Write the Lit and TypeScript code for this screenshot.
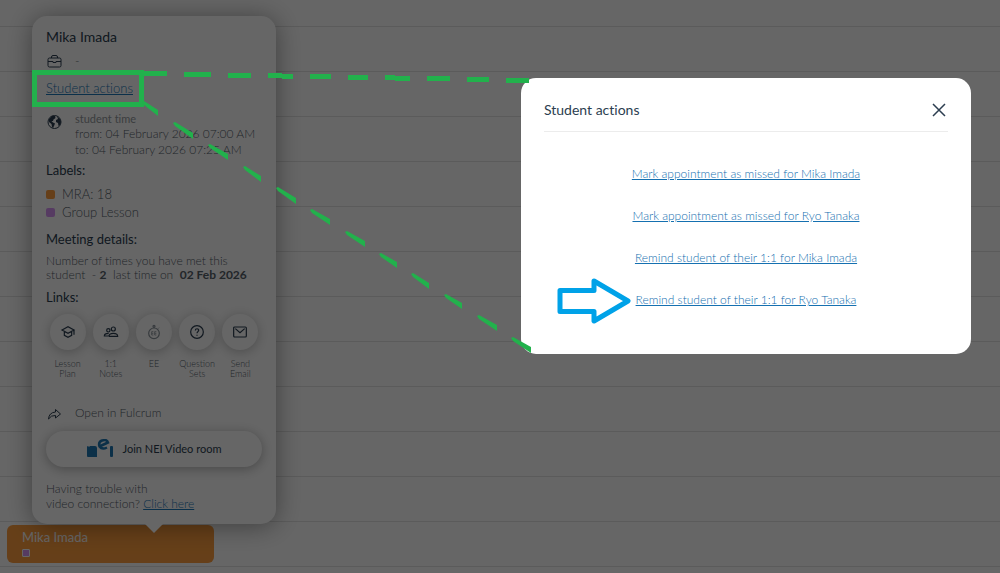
import { LitElement, html, css, svg } from "lit";
import { customElement } from "lit/decorators.js";

const cap = svg`<path d="M3 9 L12 4 L21 9 L12 14 Z M6.500 11 V17 L12 20 L17.500 17 V11 M21 9 V16"/>`;
const people = svg`<circle cx="8" cy="9.500" r="2.500"/><circle cx="15.500" cy="7.500" r="3"/><path d="M9 18 H2 C2 15.500 5 14 8.500 14 M9 18.500 H22 C22 15.500 19 14 15.500 14 C12 14 9 15.500 9 18.500"/>`;
const watch = svg`<circle cx="12" cy="14" r="8"/><circle cx="12" cy="3.500" r="1.500"/><path d="M12 5 V6 M18 7 L19.500 5.500 M11 11.500 H8.500 V16.500 H11 M8.500 14 H11 M15.500 11.500 H13 V16.500 H15.500 M13 14 H15.500" stroke-width="1.200"/>`;
const help = svg`<circle cx="12" cy="12" r="9.500"/><path d="M9.500 9.800 C9.500 6.200 14.800 6.400 14.500 9.600 C14.300 11.500 12 11.500 12 14 M12 16 V17.500"/>`;
const mail = svg`<rect x="2.500" y="4.500" width="19" height="15" rx="1.500"/><path d="M5 7 L12 13 L19 7"/>`;

const shortcuts = [
  { label: "Lesson Plan", icon: cap },
  { label: "1:1 Notes", icon: people },
  { label: "EE", icon: watch, soft: true },
  { label: "Question Sets", icon: help },
  { label: "Send Email", icon: mail },
];

const actions = [
  "Mark appointment as missed for Mika Imada",
  "Mark appointment as missed for Ryo Tanaka",
  "Remind student of their 1:1 for Mika Imada",
  "Remind student of their 1:1 for Ryo Tanaka",
];

// Hand-drawn dashes of the callout: start x, start y, end x, end y (upper edge).
const dashes = [
  [144, 101, 158, 110], [175, 122, 193, 133], [210, 144, 228, 154], [245, 166, 261, 176],
  [278, 187, 296, 198], [312, 209, 330, 219], [347, 231, 365, 241], [381, 253, 397, 262],
  [413, 273, 429, 283], [446, 294, 462, 303], [479, 315, 497, 325], [513, 337, 531, 347],
];

@customElement("student-popover")
class StudentPopover extends LitElement {
  static styles = css`
    :host {
      display: block;
      box-sizing: border-box;
      background: #fff;
      border-radius: 15px;
      padding: 12px 14px 13px;
      box-shadow: 0 2px 26px rgba(0, 0, 0, 0.4);
      color: #56616a;
      font-size: 12px;
      font-weight: 300;
      line-height: 16px;
    }
    :host::after {
      content: "";
      position: absolute;
      top: 100%;
      left: 50%;
      margin-left: -9px;
      border: 9px solid transparent;
      border-top-color: #fff;
      border-bottom: 0;
    }
    h2, h3, p { margin: 0; font-weight: 400; color: #2c3e50; }
    h2 { font-size: 14px; line-height: 18px; }
    h3 { font-size: 13px; line-height: 18px; }
    a { color: #1c78b8; }
    p { color: inherit; font-weight: inherit; }
    .line { display: grid; grid-template-columns: 17px 1fr; column-gap: 12px; }
    .line svg { width: 16px; height: 16px; color: #2c3e50; }
    .job { margin-top: 7px; }
    .act { margin: 11px 0 16px; font-size: 13px; }
    .time { margin-bottom: 3px; white-space: nowrap; }
    .time svg { margin-top: 1px; }
    .hint { font-size: 11px; line-height: 14px; font-weight: 400; color: #93999d; }
    .tags { list-style: none; margin: 6px 0 9px; padding: 0; line-height: 18px; font-size: 13px; }
    .tags li { display: flex; align-items: center; gap: 7px; }
    .dot { width: 9px; height: 9px; border-radius: 2px; background: #ff9f3f; }
    .violet { background: #d895f5; }
    .met { margin: 6px 0 6px; line-height: 14px; }
    .met b { font-weight: 700; }
    .round { display: grid; grid-template-columns: repeat(5, 1fr); margin-top: 8px; }
    .round button {
      font: 300 9px/10px Lato, sans-serif;
      color: #56616a;
      border: 0;
      padding: 0;
      background: none;
      display: flex;
      flex-direction: column;
      align-items: center;
      gap: 9px;
    }
    .label { width: min-content; }
    .disc {
      display: grid;
      place-items: center;
      width: 36px;
      height: 36px;
      border-radius: 50%;
      background: #fff;
      box-shadow: 0 2px 12px rgba(0, 0, 0, 0.25);
      color: #2c3e50;
    }
    .disc.soft { color: #8a939b; }
    .disc svg { width: 16px; height: 16px; }
    .open { margin: 26px 0 10px; font-size: 12px; }
    .join {
      display: flex;
      align-items: center;
      justify-content: center;
      gap: 9px;
      width: 100%;
      height: 36px;
      border: 0;
      border-radius: 18px;
      background: #fff;
      box-shadow: 0 2px 12px rgba(0, 0, 0, 0.3);
      font: 400 11px/16px Lato, sans-serif;
      color: #2c3e50;
    }
    .join svg { width: 27px; height: 20px; }
    .trouble { margin-top: 14px; line-height: 15px; }
  `;

  render() {
    return html`
      <h2>Mika Imada</h2>
      <div class="line job">
        <svg viewBox="0 0 16 16" fill="none" stroke="currentColor"><rect x="2" y="5" width="13" height="9" rx="1.500"/><path d="M5.500 5 V4 Q5.500 2.500 7 2.500 H10 Q11.500 2.500 11.500 4 V5 M2 8.500 H7 V9.500 H10 V8.500 H15"/></svg>
        <span>-</span>
      </div>
      <p class="act"><a href="#actions">Student actions</a></p>
      <div class="line time">
        <svg viewBox="0 0 16 16"><circle cx="8.500" cy="9" r="6.500" fill="none" stroke="currentColor"/><path fill="currentColor" d="M3 6 L6 3 L9 3 L9.500 5 L7.500 6.500 L7 8 L5.500 8 L7 9.500 L9 10.500 L8 13 L7 15 L6 14 L5.500 11 L3 9 Z M11 3.500 L14 6 L15 9 L14 12 L12.500 13 L12 10 L10 9 L10 7 L12 6 Z"/></svg>
        <div>
          <div class="hint">student time</div>
          <div>from: 04 February 2026 07:00 AM</div>
          <div>to: 04 February 2026 07:25 AM</div>
        </div>
      </div>
      <h3>Labels:</h3>
      <ul class="tags">
        <li><span class="dot"></span>MRA: 18</li>
        <li><span class="dot violet"></span>Group Lesson</li>
      </ul>
      <h3>Meeting details:</h3>
      <p class="met">Number of times you have met this<br />student &nbsp;- <b>2</b> &nbsp;last time on &nbsp;<b>02 Feb 2026</b></p>
      <h3>Links:</h3>
      <div class="round">
        ${shortcuts.map((s) => html`<button type="button">
          <span class="disc ${s.soft ? "soft" : ""}"><svg viewBox="0 0 24 24" fill="none" stroke="currentColor" stroke-width="1.800">${s.icon}</svg></span>
          <span class="label">${s.label}</span>
        </button>`)}
      </div>
      <div class="line open">
        <svg viewBox="0 0 16 16" fill="none" stroke="currentColor"><path stroke-linejoin="round" d="M9.500 4.500 L14.500 9 L9.500 13 V10.500 Q5 10 2.500 14 Q3 7.500 9.500 7 Z"/></svg>
        <span>Open in Fulcrum</span>
      </div>
      <button class="join" type="button">
        <svg viewBox="0 0 27 20" fill="#1f79b5"><path d="M0 8 Q0 7 1 7 L2 8 L3 7 H8 Q10 7 10 9 V18 H1 Q0 18 0 17 Z"/><rect x="23" y="7" width="3" height="11" rx="1"/><path d="M20 8.500 Q15 11 12.500 7.500 Q11 3 15 1.500 Q20 0 21 3.500 L13.500 7" fill="none" stroke="#1f79b5" stroke-width="2.500"/></svg>
        Join NEI Video room
      </button>
      <p class="trouble">Having trouble with<br />video connection? <a href="#help">Click here</a></p>
    `;
  }
}

@customElement("actions-dialog")
class ActionsDialog extends LitElement {
  static styles = css`
    :host {
      display: block;
      box-sizing: border-box;
      background: #fff;
      border-radius: 15px;
      padding: 20px 23px 45px;
      color: #2c3e50;
    }
    header {
      display: flex;
      align-items: center;
      justify-content: space-between;
      height: 33px;
      border-bottom: 1px solid #ececec;
    }
    h1 { margin: 0; padding-bottom: 9px; font-size: 14px; line-height: 16px; font-weight: 400; }
    header button { width: 18px; height: 18px; padding: 0; margin-bottom: 9px; border: 0; background: none; color: inherit; }
    header svg { display: block; width: 18px; height: 18px; }
    ul {
      list-style: none;
      margin: 33px 0 0;
      padding: 0;
      display: grid;
      gap: 24px;
      justify-items: center;
      font-size: 12px;
      font-weight: 300;
      line-height: 18px;
    }
    a { color: #1570b0; }
  `;

  render() {
    return html`
      <header>
        <h1>Student actions</h1>
        <button type="button" aria-label="Close"><svg viewBox="0 0 18 18" fill="none" stroke="currentColor" stroke-width="1.500"><path d="M3 3 L15 15 M15 3 L3 15"/></svg></button>
      </header>
      <ul>${actions.map((a) => html`<li><a href="#action">${a}</a></li>`)}</ul>
    `;
  }
}

@customElement("app-root")
class AppRoot extends LitElement {
  static styles = css`
    :host {
      display: block;
      position: relative;
      height: 100vh;
      overflow: hidden;
      background: #fff;
      font-family: Lato, sans-serif;
      font-variant-ligatures: none;
    }
    .slots { display: grid; grid-template-rows: 27px; grid-auto-rows: 45px; }
    .slot { border-bottom: 1px solid #e4e4e4; }
    .event {
      position: absolute;
      left: 7px;
      top: 525px;
      box-sizing: border-box;
      width: 207px;
      padding: 4px 15px 6px;
      border-radius: 6px;
      background: #ff9f3f;
      color: #fff;
      font-size: 13px;
      line-height: 16px;
    }
    .mark { margin-top: 4px; width: 6px; height: 6px; border: 1px solid #fff; border-radius: 1px; background: #d895f5; }
    student-popover { position: absolute; left: 32px; top: 16px; width: 244px; }
    .shade { position: absolute; inset: 0; background: rgba(0, 0, 0, 0.6); display: flex; justify-content: flex-end; align-items: flex-start; padding: 78px 29px 0; }
    actions-dialog { width: 450px; }
    .notes { position: absolute; left: 0; top: 0; width: 1000px; height: 573px; pointer-events: none; }
  `;

  render() {
    return html`
      <div class="slots">${Array.from({ length: 13 }, () => html`<div class="slot"></div>`)}</div>
      <div class="event"><div>Mika Imada</div><div class="mark"></div></div>
      <student-popover></student-popover>
      <div class="shade"><actions-dialog></actions-dialog></div>
      <svg class="notes" viewBox="0 0 1000 573" fill="none" stroke="#22b14c" stroke-width="5">
        <rect x="34.500" y="72.500" width="107" height="32"/>
        <path d="M144 73.500 H167 M184 74.500 H211 M228 75.500 H251 M268 75.500 H282 M282 76.500 H293 M310 76.500 H331 M348 77.500 H368 M385 77.500 H395 M395 78.500 H410 M427 78.500 H450 M467 79.500 H489 M506 80.500 H529"/>
        ${dashes.map(([a, b, c, d]) => svg`<path stroke="none" fill="#22b14c" d="M${a} ${b} L${c} ${d} V${d + 6} L${a} ${b + 4} L${a - 2} ${b + 1} Z"/>`)}
        <path stroke="#00a2e8" stroke-linejoin="round" d="M560 290.500 H594 V281 L628 301 L594 321 V311.500 H560 Z"/>
      </svg>
    `;
  }
}
